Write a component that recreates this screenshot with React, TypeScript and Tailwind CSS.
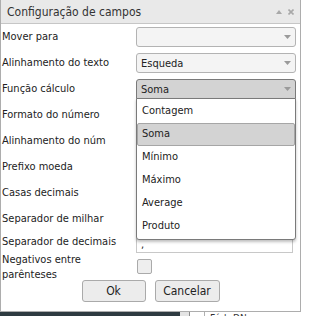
const rows = [
  'Formato do número',
  'Alinhamento do núm',
  'Prefixo moeda',
  'Casas decimais',
  'Separador de milhar',
];

const options = ['Contagem', 'Soma', 'Mínimo', 'Máximo', 'Average', 'Produto'];

function Arrow() {
  return (
    <svg width="7" height="4" viewBox="0 0 7 4" className="shrink-0">
      <path d="M0 0 L7 0 L3.5 4 Z" fill="#9a9a9a" />
    </svg>
  );
}

function Select({ value, open }: { value?: string; open?: boolean }) {
  return (
    <div
      className={
        open
          ? 'flex items-center justify-between w-[160px] h-[20px] pl-[4px] pr-[4px] border border-[#7a7a7a] rounded-t-[3px] bg-[#d3d3d3]'
          : 'flex items-center justify-between w-[160px] h-[20px] pl-[4px] pr-[4px] border border-[#b3b3b3] rounded-[3px] bg-[#f4f4f4]'
      }
    >
      <span className="leading-none">{value}</span>
      <Arrow />
    </div>
  );
}

export default function App() {
  return (
    <div className="relative w-[306px] h-[316px] bg-white overflow-hidden text-[11px] text-[#222] font-['DejaVu_Sans_Condensed','DejaVu_Sans',sans-serif]">
      <div className="w-[301px] h-[312px] border border-[#adadad] border-t-0 flex flex-col bg-white">
        {/* header */}
        <div className="h-[24px] shrink-0 flex items-center justify-between pl-[6px] pr-[6px] bg-[#e9e9e9] border-b border-[#c6c6c6]">
          <span className="text-[12px] text-[#333]">Configuração de campos</span>
          <div className="flex items-center gap-[6px]">
            <svg width="6" height="4" viewBox="0 0 6 4">
              <path d="M0 4 L6 4 L3 0 Z" fill="#a8a8a8" />
            </svg>
            <svg width="6" height="6" viewBox="0 0 6 6">
              <path d="M0.5 0.5 L5.5 5.5 M5.5 0.5 L0.5 5.5" stroke="#a8a8a8" strokeWidth="1.6" />
            </svg>
          </div>
        </div>

        {/* body */}
        <div className="flex flex-col pl-[1px]">
          <div className="h-[26px] flex items-center">
            <span className="w-[134px]">Mover para</span>
            <Select />
          </div>
          <div className="h-[26px] flex items-center">
            <span className="w-[134px]">Alinhamento do texto</span>
            <Select value="Esqueda" />
          </div>
          <div className="h-[26px] flex items-center">
            <span className="w-[134px]">Função cálculo</span>
            <div className="relative">
              <Select value="Soma" open />
              {/* open dropdown list */}
              <div className="absolute left-0 top-[19px] z-10 w-[160px] py-[1px] bg-white border border-[#7a7a7a] rounded-b-[3px] shadow-[0_2px_3px_rgba(0,0,0,0.25)]">
                {options.map((o) => (
                  <div
                    key={o}
                    className={
                      o === 'Soma'
                        ? 'h-[23px] flex items-center pl-[4px] bg-[#d3d3d3] border border-[#a6a6a6] rounded-[2px]'
                        : 'h-[23px] flex items-center pl-[5px]'
                    }
                  >
                    {o}
                  </div>
                ))}
              </div>
            </div>
          </div>
          {rows.map((r) => (
            <div key={r} className="h-[26px] flex items-center">
              <span className="w-[134px]">{r}</span>
            </div>
          ))}
          <div className="h-[21px] flex items-center">
            <span className="w-[134px]">Separador de decimais</span>
            <div className="self-end w-[157px] h-[16px] border border-[#c8c8c8] pl-[4px] flex items-end leading-[14px]">
              ,
            </div>
          </div>
          <div className="h-[27px] flex items-center">
            <span className="w-[135px] leading-[15px]">
              Negativos entre
              <br />
              parênteses
            </span>
            <div className="w-[15px] h-[15px] border border-[#aaaaaa] rounded-[2px] bg-[#eeeeee]" />
          </div>
          <div className="h-[22px] flex justify-center gap-[9px] pr-[1px] text-[12px]">
            <button className="w-[64px] h-[22px] border border-[#aaaaaa] rounded-[3px] bg-[#ececec] text-[#222]">
              Ok
            </button>
            <button className="w-[65px] h-[22px] border border-[#aaaaaa] rounded-[3px] bg-[#ececec] text-[#222]">
              Cancelar
            </button>
          </div>
        </div>
      </div>

      {/* page behind the dialog */}
      <div className="flex h-[4px] w-[301px]">
        <div className="w-[180px] bg-[#2e3b41]" />
        <div className="w-[10px] bg-[#e4e4e4] border-r border-[#8c8c8c]" />
        <div className="w-[15px] bg-white border-r border-[#b0b0b0]" />
        <div className="flex-1 bg-white pl-[5px] pt-[1px] overflow-hidden text-[10px] leading-[12px] text-[#333]">
          Fórb-DN
        </div>
      </div>
    </div>
  );
}
